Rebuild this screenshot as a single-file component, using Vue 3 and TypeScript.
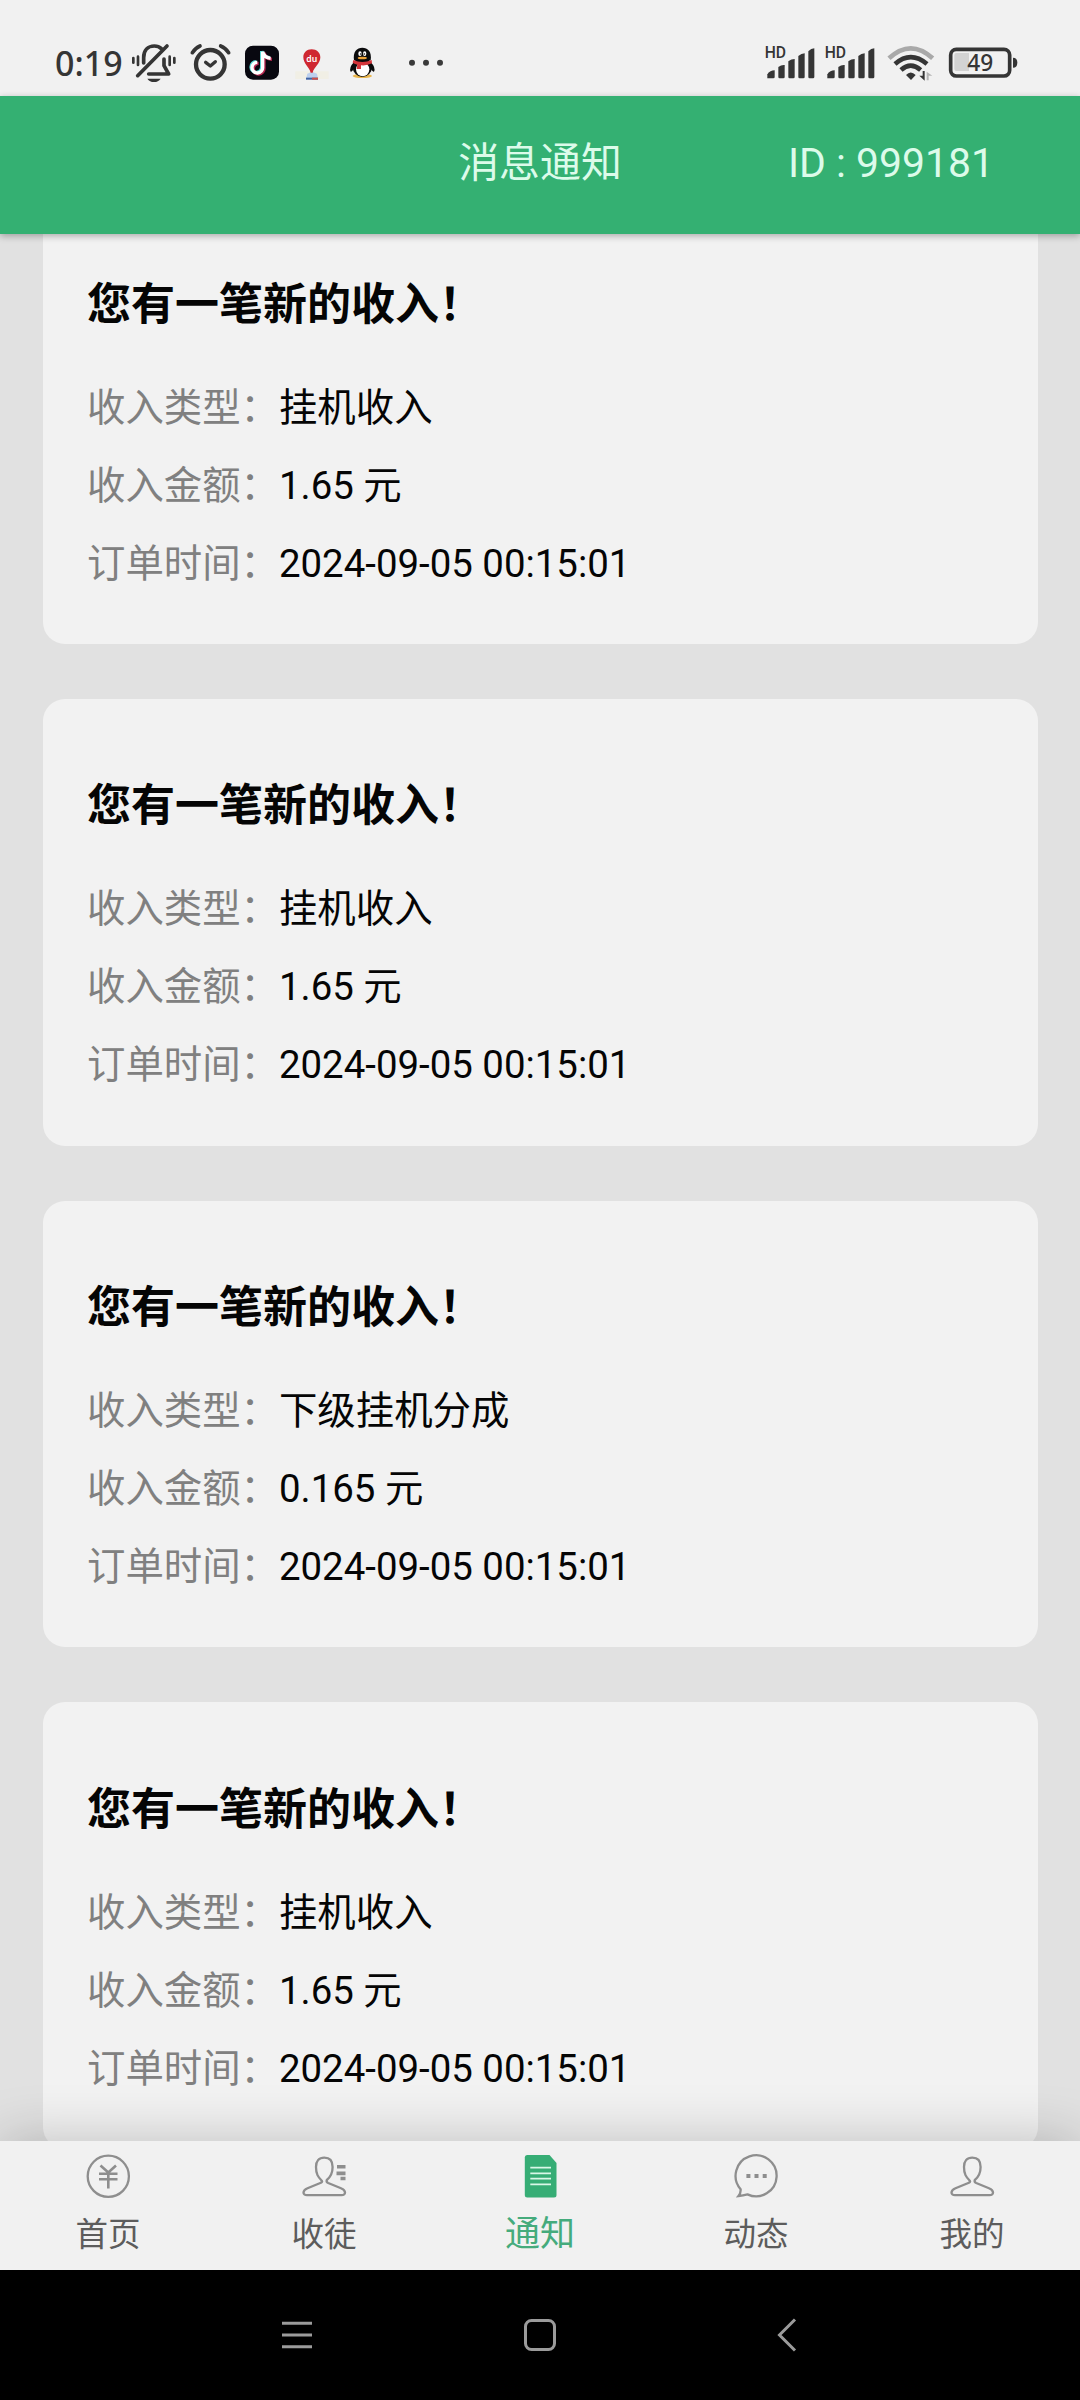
<script setup lang="ts">
interface Income {
  id: number
  type: string
  amount: string
  time: string
}

interface Tab {
  key: string
  label: string
}

const title = '消息通知'
const userId = '999181'
const activeTab = 'notice'

const incomes: Income[] = [
  { id: 1, type: '挂机收入', amount: '1.65 元', time: '2024-09-05 00:15:01' },
  { id: 2, type: '挂机收入', amount: '1.65 元', time: '2024-09-05 00:15:01' },
  { id: 3, type: '下级挂机分成', amount: '0.165 元', time: '2024-09-05 00:15:01' },
  { id: 4, type: '挂机收入', amount: '1.65 元', time: '2024-09-05 00:15:01' },
]

const tabs: Tab[] = [
  { key: 'home', label: '首页' },
  { key: 'invite', label: '收徒' },
  { key: 'notice', label: '通知' },
  { key: 'feed', label: '动态' },
  { key: 'mine', label: '我的' },
]

const person =
  'M22 29C18 25 16 22 16 15C16 9 19 5.7 24.3 5.7C29.5 5.7 32.6 9 32.6 15C32.6 22 30.5 25 26.8 28Q26 30 28.2 31L41 36.3C46.4 38.6 46.2 43.2 41.5 43.2H7C2.300 43.200 2.200 38.600 7.500 36.300L20.300 31Q22.600 30 22 29Z'
</script>

<template>
  <div class="screen">
    <div class="status">
      <span class="clock">0:19</span>
      <svg class="bell" viewBox="273 40 138 120">
        <g fill="none" stroke="#353535" stroke-width="11" stroke-linecap="round">
          <path d="M311 100V84C311 62 324 49 343 49C352 49 359 52 364 57" />
          <path d="M372 88V108L386 133H326" stroke-linejoin="round" />
          <path d="M381 49L293 138" />
          <path d="M280 85V99M294 81V106M389 81V106M403 85V99" stroke-width="8" />
        </g>
        <path d="M322 147H362Q355 157 342 157T322 147Z" fill="#353535" />
      </svg>
      <svg class="alarm" viewBox="447 40 129 120">
        <g fill="none" stroke="#353535" stroke-linecap="round">
          <circle cx="511" cy="104" r="43" stroke-width="13" />
          <path d="M457 69Q466 55 480 49M542 49Q557 55 566 69" stroke-width="11" />
          <path d="M497 98L511 109L526 96" stroke-width="10" stroke-linejoin="round" />
        </g>
      </svg>
      <svg class="tiktok" viewBox="612 40 108 120">
        <rect x="615" y="48" width="102" height="102" rx="24" fill="#080810" />
        <g fill="none" stroke-width="10">
          <path d="M668 66V113A16 16 0 1 1 652 98M668 66Q672 84 692 86" stroke="#58d8d5" transform="translate(-3 -2)" />
          <path d="M668 66V113A16 16 0 1 1 652 98M668 66Q672 84 692 86" stroke="#b52850" transform="translate(4 3)" />
          <path d="M668 66V113A16 16 0 1 1 652 98M668 66Q672 84 692 86" stroke="#fff" />
        </g>
      </svg>
      <svg class="map" viewBox="156 40 120 120">
        <path d="M166 125H266V148H166Z" fill="#f1efe5" />
        <path d="M202 132L216 126L231 132L234 149H198Z" fill="#bcd0ee" />
        <path d="M198 144H234V150H198Z" fill="#3f63a5" />
        <path d="M216 144H234V150H216Z" fill="#cf5149" />
        <path d="M215 59C200 59 190 69 190 83C190 102 208 112 212 129H218C222 112 241 102 241 83C241 69 230 59 215 59Z" fill="#cf2730" />
        <text x="215.500" y="96" text-anchor="middle" fill="#fff" font-size="26" font-weight="600">du</text>
      </svg>
      <svg class="qq" viewBox="327 40 81 120">
        <ellipse cx="367" cy="139" rx="29" ry="6" fill="#e9b64d" />
        <path d="M343 96Q326 113 332 126Q336 127 343 116M391 96Q408 113 402 126Q398 127 391 116" fill="#0b0b0c" />
        <ellipse cx="367" cy="112" rx="29" ry="30" fill="#0b0b0c" />
        <path d="M342 92C338 66 351 54 367 54S396 66 392 92Z" fill="#0b0b0c" />
        <ellipse cx="368" cy="119" rx="20" ry="21" fill="#fff" />
        <ellipse cx="360" cy="72" rx="5" ry="7" fill="#fff" />
        <ellipse cx="374" cy="72" rx="5" ry="7" fill="#fff" />
        <circle cx="362" cy="73" r="2.500" fill="#111" />
        <circle cx="373" cy="73" r="2.500" fill="#111" />
        <ellipse cx="367" cy="85" rx="14" ry="4" fill="#eaa33a" />
        <path d="M340 91Q367 103 395 91L396 101Q380 109 363 107V118H350L352 105Q342 102 338 99Z" fill="#d4343a" />
      </svg>
      <svg class="more" viewBox="504 40 108 120" fill="#3a3a3a">
        <circle cx="516" cy="99" r="9" />
        <circle cx="558" cy="99" r="9" />
        <circle cx="600" cy="99" r="9" />
      </svg>
      <span class="spacer" />
      <svg v-for="n in 2" :key="n" class="signal" viewBox="42 40 156 120" fill="#353535">
        <text x="44" y="86" font-family="Roboto, sans-serif" font-size="47" font-weight="500">HD</text>
        <path d="M52 146V134Q60 122 74 122V142Q74 146 70 146Z" />
        <path d="M85 112Q94 105 104 106V142Q104 146 100 146H89Q85 146 85 142Z" />
        <path d="M115 95Q124 88 134 88V142Q134 146 130 146H119Q115 146 115 142Z" />
        <path d="M145 79Q154 71 164 71V142Q164 146 160 146H149Q145 146 145 142Z" />
        <path d="M175 65Q183 56 193 56V142Q193 146 189 146H179Q175 146 175 142Z" />
      </svg>
      <svg class="wifi" viewBox="411 40 144 120">
        <g fill="none" stroke-width="14">
          <path d="M417 86Q482 26 548 86" stroke="#a9a9a9" />
          <path d="M435 103Q482 62 531 103" stroke="#353535" />
          <path d="M453 121Q482 95 512 121" stroke="#353535" />
        </g>
        <path d="M468 136Q482 121 497 136L483 151Z" fill="#353535" />
        <path d="M524 124V153L508 138H518V124Z" fill="#353535" />
        <path d="M530 152V126L547 138H536V152Z" fill="#b5b5b5" />
      </svg>
      <svg class="battery" viewBox="594 40 210 120">
        <path d="M619 70H657V124H619Q613 124 613 118V76Q613 70 619 70Z" fill="#d3d3d3" />
        <rect x="602" y="59" width="177" height="80" rx="17" fill="none" stroke="#353535" stroke-width="11" />
        <path d="M789 84Q802 84 802 99T789 114Z" fill="#353535" />
        <text x="691" y="125" text-anchor="middle" fill="#353535" font-size="68" font-weight="500">49</text>
      </svg>
    </div>

    <header class="header">
      <span />
      <h1>{{ title }}</h1>
      <span class="uid">ID : {{ userId }}</span>
    </header>

    <main class="feed">
      <article v-for="item in incomes" :key="item.id" class="card">
        <h2>您有一笔新的收入！</h2>
        <p><span>收入类型：</span>{{ item.type }}</p>
        <p><span>收入金额：</span>{{ item.amount }}</p>
        <p><span>订单时间：</span>{{ item.time }}</p>
      </article>
    </main>

    <nav class="tabs">
      <div v-for="tab in tabs" :key="tab.key" class="tab" :class="{ active: tab.key === activeTab }">
        <svg viewBox="0 0 48 48" fill="none" stroke="#8e8e8e" stroke-width="2.300">
          <template v-if="tab.key === 'home'">
            <circle cx="24.300" cy="24.300" r="20.600" />
            <path d="M16.500 13.500L24.300 20.500L32 13.500M15 21.700H33.500M15 27.300H33.500M24.300 20.500V36.500" stroke-width="2.600" />
          </template>
          <template v-else-if="tab.key === 'invite'">
            <path :d="person" />
            <path d="M37 14.800H45.500M36.500 21.400H45.500M40.500 26.500H45.500" stroke-width="3.600" />
          </template>
          <template v-else-if="tab.key === 'notice'">
            <path d="M11 3H33.500L40.500 11V43Q40.500 45.500 38 45.500H11.300Q8.800 45.500 8.800 43V5.500Q8.800 3 11 3Z" fill="#36ad75" stroke="none" />
            <path d="M14.300 15.700H35M14.300 21.300H35M14.300 26.700H35M14.300 32.300H35" stroke="#d9f7e8" stroke-width="1.800" />
          </template>
          <template v-else-if="tab.key === 'feed'">
            <path d="M8.600 37.200A20.500 20.500 0 1 1 15.500 42.400Q11 43.500 6.500 44Q9 41 8.600 37.200Z" />
            <path d="M14.400 24H18.400M22.500 24H26.500M30.700 24H34.700" stroke-width="4" />
          </template>
          <path v-else :d="person" />
        </svg>
        <span>{{ tab.label }}</span>
      </div>
    </nav>

    <div class="softkeys">
      <svg width="32" height="34" viewBox="0 0 32 34"><path d="M1 5.200H31M1 17H31M1 28.800H31" /></svg>
      <svg class="home-key" width="34" height="34" viewBox="0 0 34 34"><rect x="2.500" y="2.500" width="29" height="29" rx="6" /></svg>
      <svg width="20" height="34" viewBox="0 0 20 34"><path d="M18 1.500L2.500 17L18 32.500" /></svg>
    </div>
  </div>
</template>

<style>
body {
  margin: 0;
  background: #000;
}
</style>

<style scoped>
.screen {
  display: flex;
  flex-direction: column;
  width: 1080px;
  height: 2400px;
  overflow: hidden;
  background: #e1e1e1;
  font-family: Roboto, "Noto Sans CJK SC", sans-serif;
}

.status {
  display: flex;
  flex: none;
  align-items: center;
  box-sizing: border-box;
  height: 96px;
  padding: 43px 62px 13px 55px;
  background: #f1f1f1;
  font-family: "Noto Sans", sans-serif;
}

.status svg {
  flex: none;
  height: 40px;
  overflow: visible;
}

.clock {
  width: 76px;
  color: #353535;
  font-size: 34px;
  font-weight: 500;
  line-height: 40px;
  white-space: nowrap;
}

.bell { width: 46px; }
.alarm { width: 43px; margin-left: 12px; }
.tiktok { width: 36px; margin-left: 12px; }
.map { width: 40px; margin-left: 12px; }
.qq { width: 27px; margin-left: 17px; }
.more { width: 36px; margin-left: 32px; }
.spacer { flex: 1; }
.signal { width: 52px; margin-right: 8px; }
.wifi { width: 48px; margin-left: 3px; }
.battery { width: 70px; margin-left: 13px; }

.header {
  position: relative;
  z-index: 1;
  display: grid;
  flex: none;
  grid-template-columns: 1fr auto 1fr;
  align-items: center;
  height: 138px;
  background: #34b072;
  box-shadow: 0 2px 7px rgba(0, 0, 0, 0.3);
  color: #dcfbea;
  font-size: 40.900px;
}

.header h1 {
  margin: 0 0 12px;
  font-size: inherit;
  font-weight: 400;
}

.uid {
  margin: 0 86px 4px 0;
  text-align: right;
}

.feed {
  display: flex;
  flex: 1;
  flex-direction: column;
  gap: 55px;
  min-height: 0;
  margin-top: -36.500px;
  padding: 0 42px 0 43px;
  overflow: hidden;
}

.card {
  flex: none;
  box-sizing: border-box;
  height: 446.600px;
  padding: 74.300px 44px 0;
  border-radius: 22px;
  background: #f2f2f2;
}

.card h2 {
  margin: 0 0 31px;
  color: #050505;
  font-size: 44px;
  font-weight: 700;
  line-height: 66px;
}

.card p {
  margin: 0;
  color: #050505;
  font-size: 38.400px;
  line-height: 78px;
}

.card p span {
  color: #808080;
}

.tabs {
  position: relative;
  z-index: 1;
  display: flex;
  flex: none;
  height: 129px;
  background: #f1f1f1;
  box-shadow: 0 0 56px rgba(0, 0, 0, 0.22);
}

.tab {
  display: flex;
  flex: 1;
  flex-direction: column;
  align-items: center;
  padding-top: 11px;
  color: #5c5c5c;
  font-size: 32.500px;
  line-height: 48px;
}

.tab svg {
  width: 48px;
  height: 48px;
  margin-bottom: 11px;
}

.tab.active {
  color: #45ab7c;
  font-size: 35px;
}

.softkeys {
  position: relative;
  z-index: 2;
  display: flex;
  flex: none;
  align-items: center;
  justify-content: space-between;
  box-sizing: border-box;
  height: 130px;
  padding: 0 283px 0 281px;
  background: #000;
}

.softkeys svg {
  fill: none;
  stroke: #9b9b9b;
  stroke-width: 3;
}

.softkeys .home-key {
  margin-right: 10px;
}
</style>
